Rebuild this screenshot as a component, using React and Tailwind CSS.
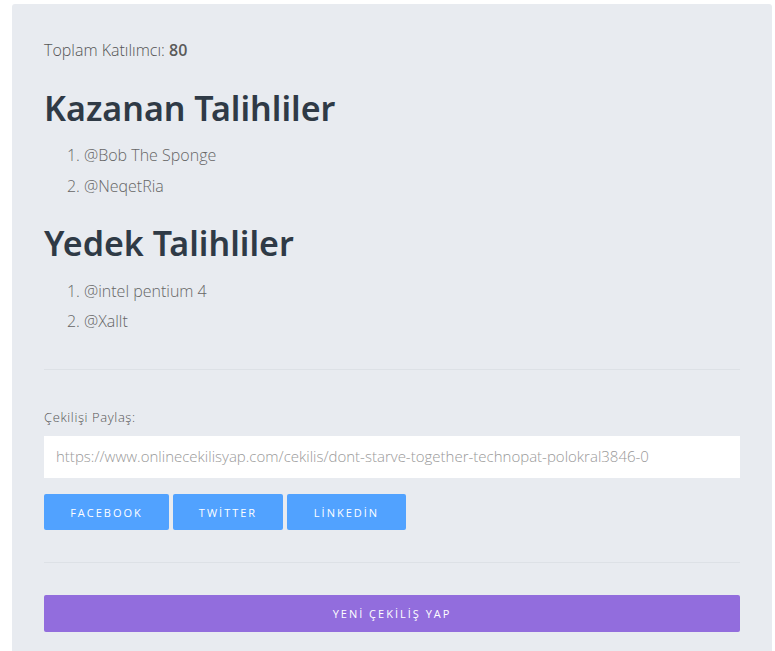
export default function App() {
  const winners = ['@Bob The Sponge', '@NeqetRia'];
  const backups = ['@intel pentium 4', '@Xallt'];
  const url = 'https://www.onlinecekilisyap.com/cekilis/dont-starve-together-technopat-polokral3846-0';

  return (
    <div className="min-h-screen bg-white pt-1 pl-3 pr-[3px]" style={{ fontFamily: '"Open Sans", sans-serif' }}>
      <div className="h-[647px] rounded-t-[3px] bg-[#e8ebf0] px-8 pt-[34px]">
        <p className="text-[16px] font-light leading-6 text-[#555]">
          Toplam Katılımcı: <b className="font-semibold text-[#5a5a5a]">80</b>
        </p>

        <h2 className="mt-[26px] text-[34px] font-semibold leading-10 text-[#2f3a46]" style={{ fontFamily: '"Noto Sans", sans-serif' }}>
          Kazanan Talihliler
        </h2>
        <ol className="mt-[12px] list-decimal pl-10 text-[16px] font-light leading-[31px] text-[#666]">
          {winners.map((w) => (
            <li key={w}>{w}</li>
          ))}
        </ol>

        <h2 className="mt-[21px] text-[34px] font-semibold leading-10 text-[#2f3a46]" style={{ fontFamily: '"Noto Sans", sans-serif' }}>
          Yedek Talihliler
        </h2>
        <ol className="mt-[13px] list-decimal pl-10 text-[16px] font-light leading-[30px] text-[#666]">
          {backups.map((w) => (
            <li key={w}>{w}</li>
          ))}
        </ol>

        <hr className="mt-[33px] border-[#dde1e6]" />

        <p className="mt-[38px] text-[13px] font-light tracking-[0.6px] text-[#555]">Çekilişi Paylaş:</p>
        <div className="mt-[8px] flex h-[42px] items-center bg-white px-3 text-[15px] font-light text-[#999]">
          {url}
        </div>

        <div className="mt-[16px] flex gap-1">
          {['FACEBOOK', 'TWİTTER', 'LİNKEDİN'].map((b, i) => (
            <button
              key={b}
              className={`h-9 rounded-[2px] bg-[#51a2ff] pt-[3px] text-[11px] font-normal tracking-[2px] text-white ${
                i === 0 ? 'w-[125px]' : i === 1 ? 'w-[110px]' : 'w-[119px]'
              }`}
            >
              {b}
            </button>
          ))}
        </div>

        <hr className="mt-[32px] border-[#dde1e6]" />

        <button className="mt-[32px] h-[37px] w-full rounded-[2px] bg-[#926ddd] pt-[3px] text-[11px] font-normal tracking-[2px] text-white">
          YENİ ÇEKİLİŞ YAP
        </button>
      </div>
    </div>
  );
}
